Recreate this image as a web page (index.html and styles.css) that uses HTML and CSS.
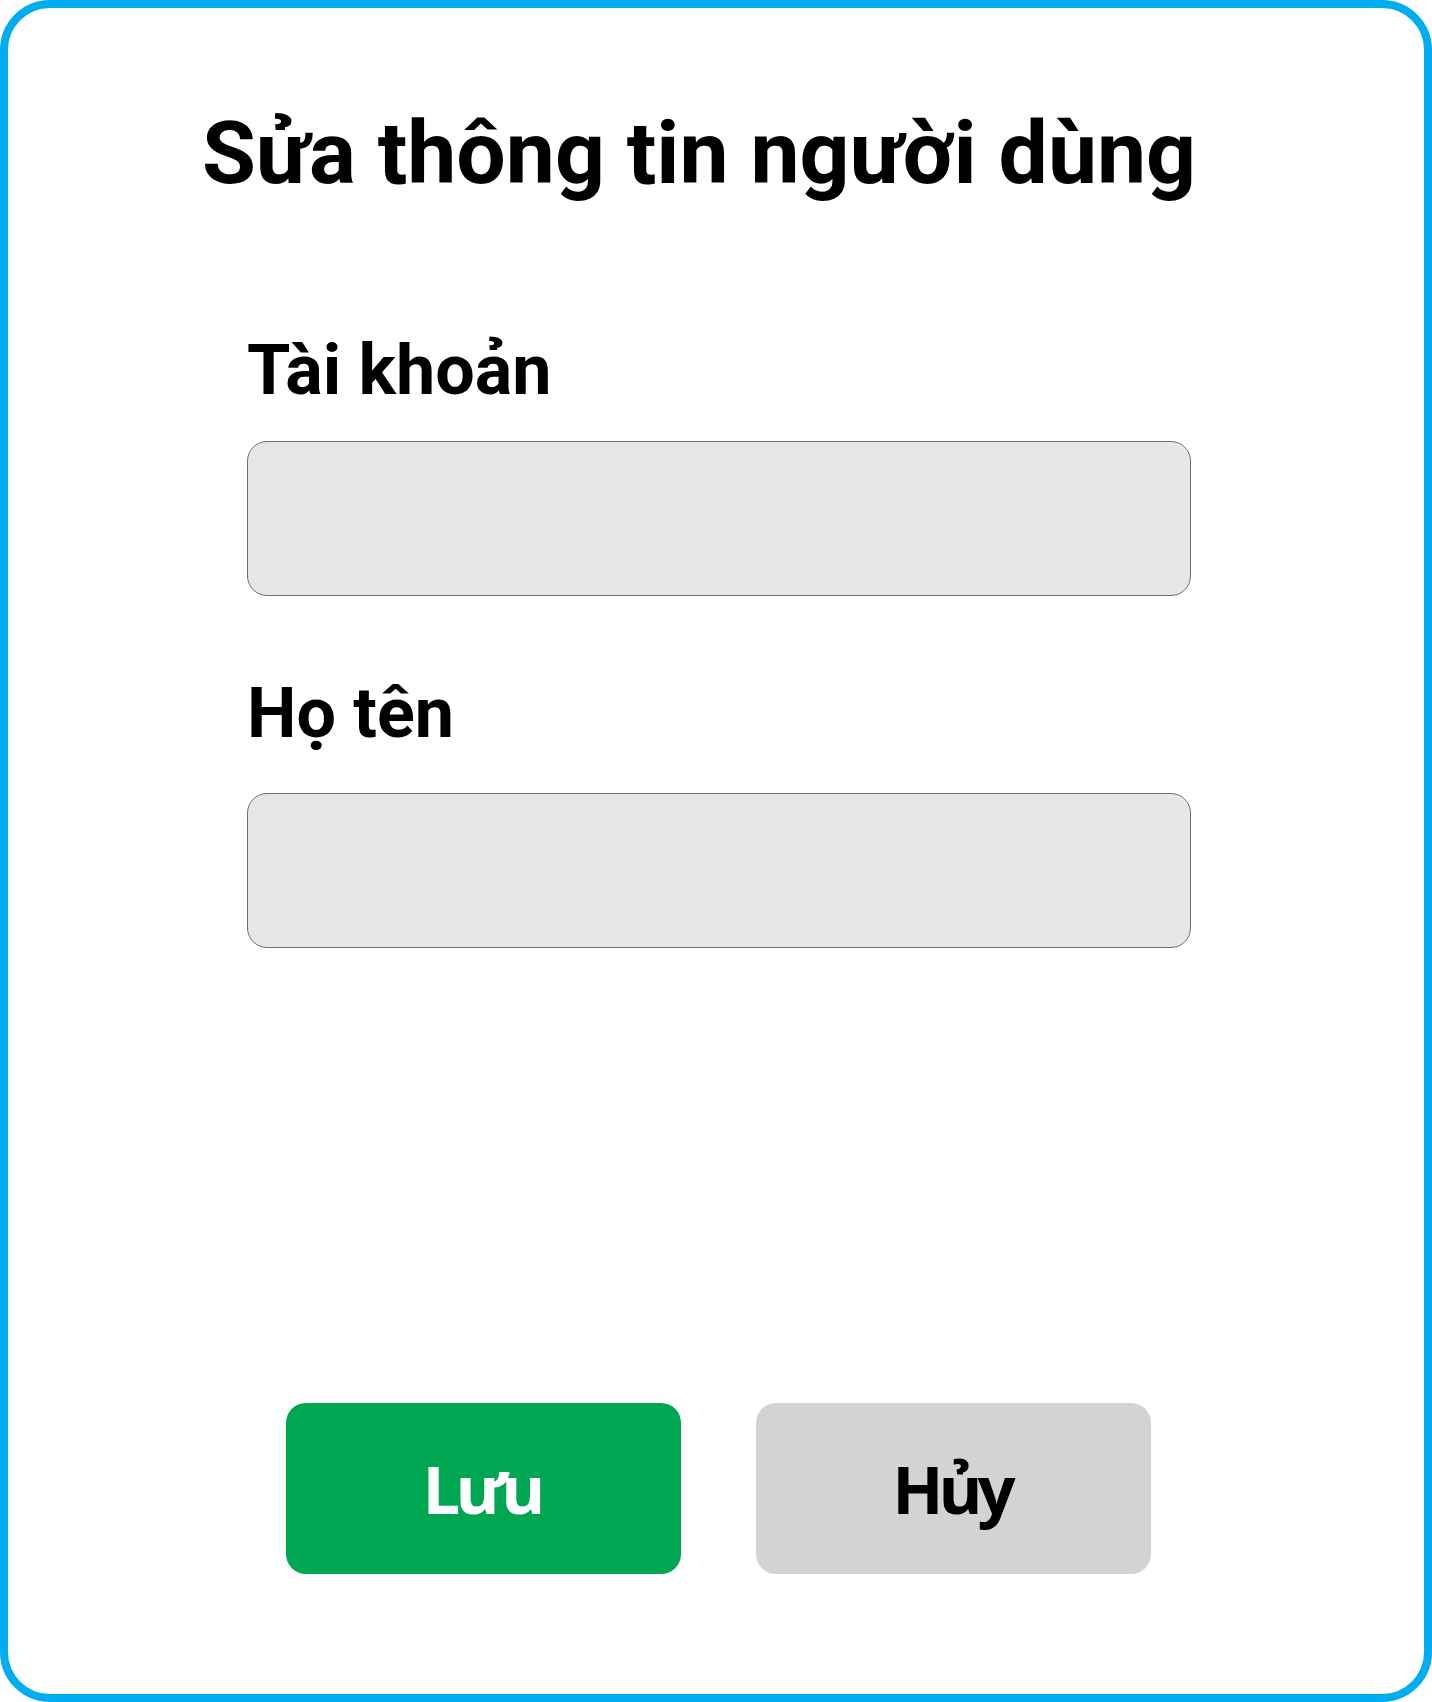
FILE: index.html
```html
<!DOCTYPE html>
<html lang="vi">
<head>
<meta charset="utf-8">
<title>Sửa thông tin người dùng</title>
<link rel="stylesheet" href="styles.css">
</head>
<body>
<div class="card">
  <h1 class="title">Sửa thông tin người dùng</h1>
  <form class="form">
    <label class="field-label" for="acc">Tài khoản</label>
    <input class="field-input field-input--first" id="acc" type="text">
    <label class="field-label field-label--second" for="name">Họ tên</label>
    <input class="field-input field-input--second" id="name" type="text">
  </form>
  <div class="actions">
    <button class="btn btn-save" type="button">Lưu</button>
    <button class="btn btn-cancel" type="button">Hủy</button>
  </div>
</div>
</body>
</html>
```
FILE: styles.css
```css
html, body {
  margin: 0;
  padding: 0;
  background: #ffffff;
}

.card {
  box-sizing: border-box;
  width: 1432px;
  height: 1702px;
  border: 8px solid #00aeef;
  border-radius: 50px;
  display: flex;
  flex-direction: column;
  background: #ffffff;
}

.title {
  margin: 102px 0 0 0;
  padding-right: 34px;
  font-family: Roboto, "Liberation Sans", sans-serif;
  font-weight: 700;
  font-size: 87.6px;
  line-height: 1;
  color: #000000;
  text-align: center;
}

.form {
  display: flex;
  flex-direction: column;
  margin: 0 0 0 239px;
  width: 944px;
}

.field-label {
  display: block;
  margin-top: 137px;
  font-family: Roboto, "Liberation Sans", sans-serif;
  font-weight: 700;
  font-size: 70px;
  line-height: 1;
  color: #000000;
}

.field-label--second {
  margin-top: 82px;
}

.field-input {
  box-sizing: border-box;
  width: 944px;
  height: 155px;
  margin-top: 36px;
  border: 1px solid #6d6e71;
  border-radius: 20px;
  background: #e6e7e8;
  font-family: Roboto, sans-serif;
  font-size: 40px;
  padding: 0 24px;
  outline: none;
}

.field-input--second {
  margin-top: 45px;
}

.actions {
  display: flex;
  gap: 75px;
  margin: 455px 0 0 278px;
}

.btn {
  box-sizing: border-box;
  width: 395px;
  height: 171px;
  border: none;
  border-radius: 20px;
  display: flex;
  align-items: center;
  justify-content: center;
  font-family: "Open Sans", sans-serif;
  font-weight: 700;
  font-size: 67px;
  letter-spacing: -5px;
  line-height: 1;
  padding: 0 4px 0 0;
}

.btn-save {
  background: #00a651;
  color: #ffffff;
}

.btn-cancel {
  background: #d1d3d4;
  color: #000000;
}
```
